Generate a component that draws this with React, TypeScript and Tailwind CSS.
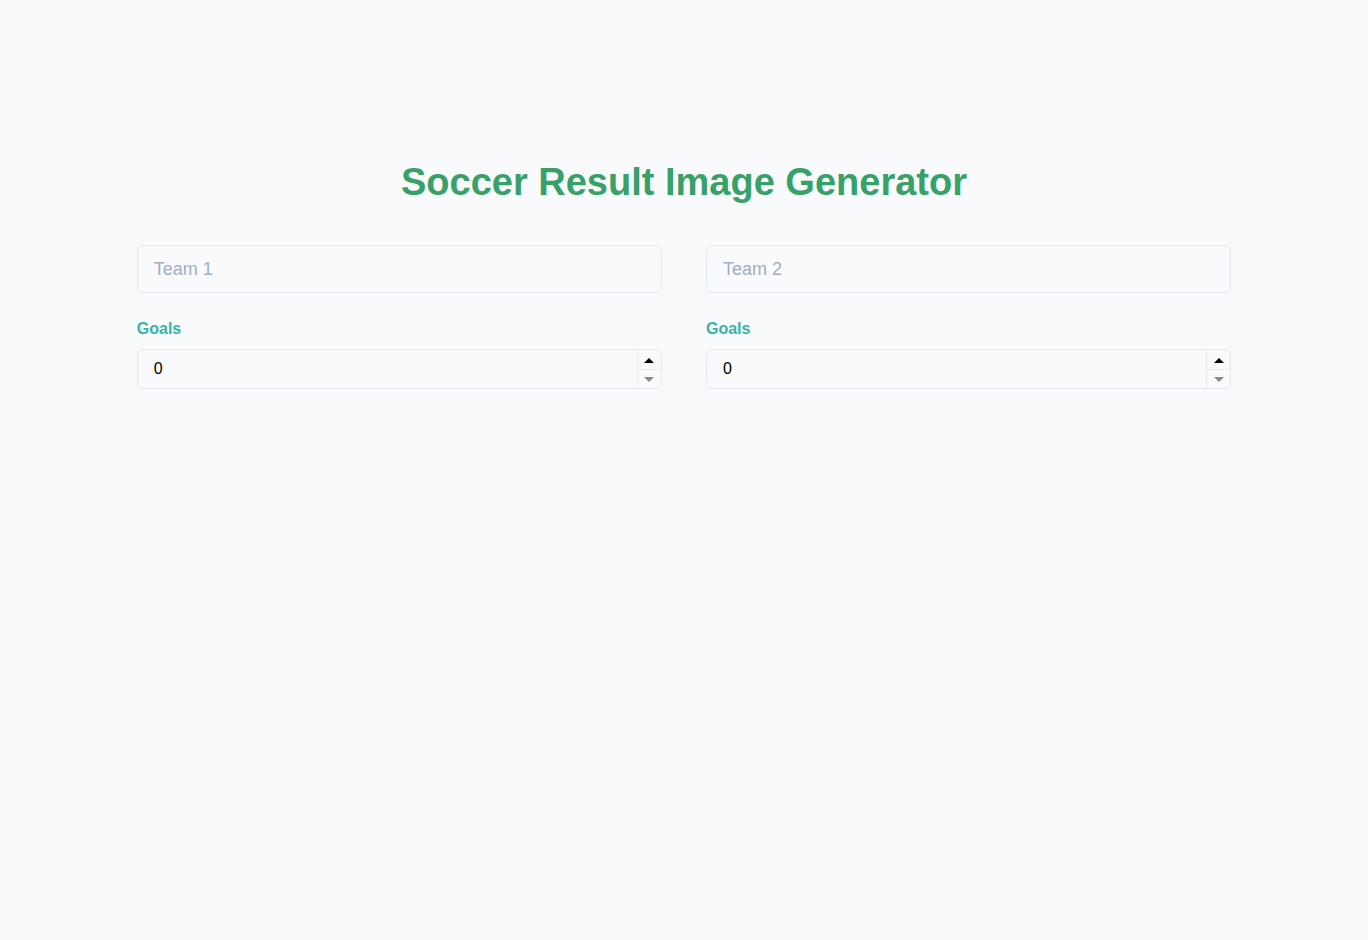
function Spinner() {
  return (
    <div className="flex w-[24px] flex-col border-l border-[#e8ecf1]">
      <button type="button" className="flex flex-1 items-center justify-center border-b border-[#e8ecf1] pt-[2px]">
        <svg width="10" height="5" viewBox="0 0 10 5">
          <path d="M0 5 L5 0 L10 5 Z" fill="#000" />
        </svg>
      </button>
      <button type="button" className="flex flex-1 items-center justify-center pt-[2px]">
        <svg width="10" height="5" viewBox="0 0 10 5">
          <path d="M0 0 L10 0 L5 5 Z" fill="#8a8a8a" />
        </svg>
      </button>
    </div>
  );
}

export default function App() {
  return (
    <div className="min-h-screen w-full bg-[#f9fafb] font-['Liberation_Sans',Arial,sans-serif]">
      <div className="mx-auto w-4/5 pt-[161px]">
        <h1 className="text-center text-[38px] leading-[42px] font-bold text-[#38a169]">
          Soccer Result Image Generator
        </h1>
        <div className="mt-[42px] grid grid-cols-2 gap-x-[44px]">
          {["Team 1", "Team 2"].map((t) => (
            <div key={t} className="flex flex-col">
              <input
                type="text"
                placeholder={t}
                className="h-[48px] w-full rounded-md border border-[#e2e8f0] bg-[#f9fafb] px-4 text-lg text-[#2d3748] outline-none placeholder:text-[#a0aec0]"
              />
              <label className="mt-[26px] text-base leading-[20px] font-bold text-[#38b2ac]">Goals</label>
              <div className="mt-[10px] flex h-[40px] w-full overflow-hidden rounded-md border border-[#e2e8f0] bg-[#f9fafb]">
                <input
                  type="number"
                  defaultValue={0}
                  className="min-w-0 flex-1 bg-transparent pl-4 text-base text-black outline-none [appearance:textfield] [&::-webkit-inner-spin-button]:appearance-none [&::-webkit-outer-spin-button]:appearance-none"
                />
                <Spinner />
              </div>
            </div>
          ))}
        </div>
      </div>
    </div>
  );
}
